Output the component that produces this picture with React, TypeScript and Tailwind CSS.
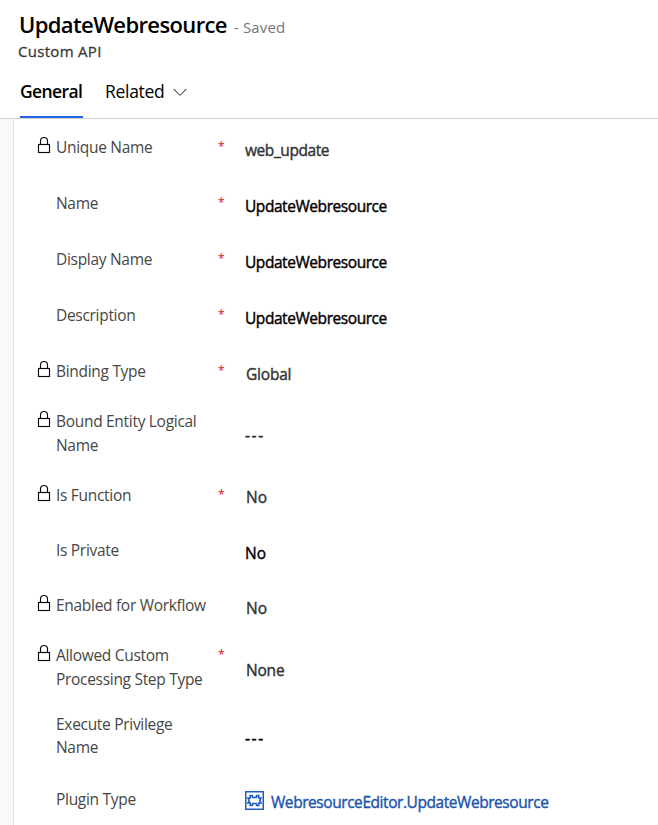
import type { ReactNode } from "react";

function LockIcon() {
  return (
    <svg className="mt-px" width="14" height="18" viewBox="0 0 14 18" fill="none" stroke="#0c0612" strokeWidth="1.15">
      <rect x="1.5" y="8.5" width="11" height="8" />
      <path d="M3.5 8.5V5a3.5 3.5 0 0 1 7 0V8.5" />
    </svg>
  );
}

function PluginIcon() {
  return (
    <svg width="19" height="19" viewBox="0 0 19 19" fill="none" stroke="#1c5fbe">
      <rect x="0.75" y="0.75" width="17.5" height="17.5" strokeWidth="1.5" />
      <path
        strokeWidth="1.7"
        d="M5.3 4.5H7.3L7.8 6.5H11.2L11.7 4.5H13.7V7H16L14.8 9.5L16 12H13.7V14.5H11.7L11.2 12.5H7.8L7.3 14.5H5.3V12H3L4.2 9.5L3 7H5.3Z"
      />
    </svg>
  );
}

type Field = {
  lines: string[];
  height: string;
  offset: string;
  locked?: boolean;
  required?: boolean;
  leading?: string;
  value: ReactNode;
};

const choice = "ml-px text-[#333333]";
const update = <span className="tracking-[-0.44px] text-black">UpdateWebresource</span>;

const fields: Field[] = [
  { lines: ["Unique Name"], height: "h-14", offset: "pt-[3px]", locked: true, required: true, value: <span className="tracking-[-0.42px] text-[#333333]">web_update</span> },
  { lines: ["Name"], height: "h-14", offset: "pt-[3px]", required: true, value: update },
  { lines: ["Display Name"], height: "h-14", offset: "pt-[3px]", required: true, value: update },
  { lines: ["Description"], height: "h-14", offset: "pt-[3px]", required: true, value: update },
  { lines: ["Binding Type"], height: "h-[50px]", offset: "pt-[3px]", locked: true, required: true, value: <span className="ml-px tracking-[-0.2px] text-[#333333]">Global</span> },
  { lines: ["Bound Entity Logical", "Name"], height: "h-[74px]", offset: "pt-[14px]", locked: true, value: <span className="tracking-[1.6px] text-[#333333]">---</span> },
  { lines: ["Is Function"], height: "h-[55px]", offset: "pt-[2px]", locked: true, required: true, value: <span className={choice}>No</span> },
  { lines: ["Is Private"], height: "h-[55px]", offset: "pt-[3px]", value: <span className="text-black">No</span> },
  { lines: ["Enabled for Workflow"], height: "h-[50px]", offset: "pt-[3px]", locked: true, value: <span className={choice}>No</span> },
  { lines: ["Allowed Custom", "Processing Step Type"], height: "h-[70px]", offset: "pt-[15px]", locked: true, required: true, value: <span className="ml-px tracking-[-0.2px] text-[#333333]">None</span> },
  { lines: ["Execute Privilege", "Name"], height: "h-[74px]", offset: "pt-[13px]", leading: "leading-[23px]", value: <span className="tracking-[1.6px] text-black">---</span> },
  {
    lines: ["Plugin Type"],
    height: "h-[37px]",
    offset: "pt-[3px]",
    value: (
      <span className="flex text-[#1c55ac]">
        <span className="mr-[7px] mt-px"><PluginIcon /></span>
        <span className="tracking-[-0.44px]">WebresourceEditor.UpdateWebresource</span>
      </span>
    ),
  },
];

function FieldRow({ field }: { field: Field }) {
  return (
    <div className={`flex shrink-0 ${field.height}`}>
      <div className="w-[19px] shrink-0">{field.locked && <LockIcon />}</div>
      <div className={`w-[162px] shrink-0 whitespace-nowrap text-[15.5px] tracking-[-0.3px] text-[#484644] ${field.leading ?? "leading-6"}`}>
        {field.lines.map((line) => (
          <div key={line}>{line}</div>
        ))}
      </div>
      <div className="w-[27px] shrink-0 text-[12px] leading-6 text-[#e00b1c]">{field.required && "*"}</div>
      <div className={`whitespace-nowrap text-[15.5px] leading-6 [-webkit-text-stroke:0.4px_currentColor] ${field.offset}`}>{field.value}</div>
    </div>
  );
}

export default function App() {
  return (
    <div className="flex h-[825px] w-[658px] flex-col overflow-hidden bg-white font-['Open_Sans','Noto_Sans',sans-serif]">
      <header className="flex h-[119px] shrink-0 flex-col border-b border-[#d2d0ce]">
        <div className="flex h-[39px] items-baseline whitespace-nowrap pl-[19px] pt-[8px]">
          <h1 className="text-[22px] font-semibold leading-8 tracking-[-0.62px] text-black">UpdateWebresource</h1>
          <span className="ml-[7px] text-[15px] tracking-[0.15px] text-[#757575]">- Saved</span>
        </div>
        <div className="pl-[18px] text-[15px] leading-6 tracking-[0.3px] text-[#3b3a39] [-webkit-text-stroke:0.3px_currentColor]">Custom API</div>
        <nav className="mt-auto flex h-[42px] pl-5 text-[17.5px] leading-[30px] text-black">
          <div className="w-[63px] whitespace-nowrap border-b-2 border-[#2266e3] font-semibold tracking-[-0.6px]">General</div>
          <div className="ml-[22px] flex whitespace-nowrap">
            <span className="tracking-[-0.3px]">Related</span>
            <svg className="ml-[9px] mt-[12px]" width="14" height="9" viewBox="0 0 14 9" fill="none" stroke="#605e5c" strokeWidth="1.1">
              <path d="M0.7 1L7 7.3L13.3 1" />
            </svg>
          </div>
        </nav>
      </header>
      <main className="flex min-h-0 flex-1">
        <div className="w-[14px] shrink-0 border-r border-[#e6e4e2] bg-[#faf9f8]" />
        <section className="flex flex-col pl-[23px] pt-[16px]">
          {fields.map((field) => (
            <FieldRow key={field.lines.join(" ")} field={field} />
          ))}
        </section>
      </main>
    </div>
  );
}
